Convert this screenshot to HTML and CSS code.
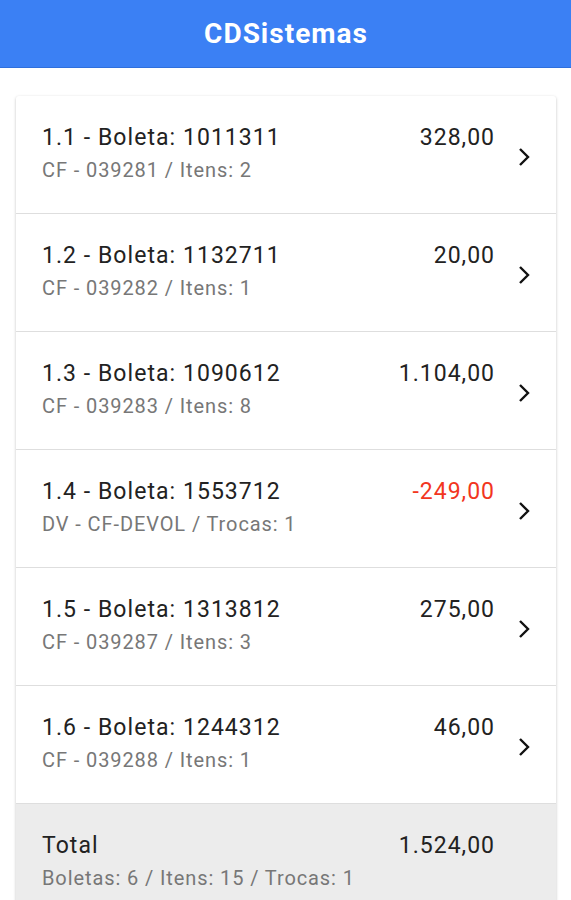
FILE: index.html
```html
<!DOCTYPE html>
<html lang="pt-BR">
  <head>
    <meta charset="UTF-8" />
    <meta name="viewport" content="width=device-width, initial-scale=1.0" />
    <title>CDSistemas</title>
    <link rel="stylesheet" href="styles.css">
  </head>

  <body>
    <header class="toolbar">
      <h1 class="toolbar-title">CDSistemas</h1>
    </header>

    <main class="content">
      <div class="card">
        <div class="item">
          <div class="item-text">
            <h2>1.1 - Boleta: 1011311</h2>
            <p>CF - 039281 / Itens: 2</p>
          </div>
          <span class="item-value">328,00</span>
          <svg class="chevron" viewBox="0 0 12 20"><path d="M2 2l8 8-8 8" /></svg>
        </div>
        <div class="item">
          <div class="item-text">
            <h2>1.2 - Boleta: 1132711</h2>
            <p>CF - 039282 / Itens: 1</p>
          </div>
          <span class="item-value">20,00</span>
          <svg class="chevron" viewBox="0 0 12 20"><path d="M2 2l8 8-8 8" /></svg>
        </div>
        <div class="item">
          <div class="item-text">
            <h2>1.3 - Boleta: 1090612</h2>
            <p>CF - 039283 / Itens: 8</p>
          </div>
          <span class="item-value">1.104,00</span>
          <svg class="chevron" viewBox="0 0 12 20"><path d="M2 2l8 8-8 8" /></svg>
        </div>
        <div class="item">
          <div class="item-text">
            <h2>1.4 - Boleta: 1553712</h2>
            <p>DV - CF-DEVOL / Trocas: 1</p>
          </div>
          <span class="item-value negative">-249,00</span>
          <svg class="chevron" viewBox="0 0 12 20"><path d="M2 2l8 8-8 8" /></svg>
        </div>
        <div class="item">
          <div class="item-text">
            <h2>1.5 - Boleta: 1313812</h2>
            <p>CF - 039287 / Itens: 3</p>
          </div>
          <span class="item-value">275,00</span>
          <svg class="chevron" viewBox="0 0 12 20"><path d="M2 2l8 8-8 8" /></svg>
        </div>
        <div class="item">
          <div class="item-text">
            <h2>1.6 - Boleta: 1244312</h2>
            <p>CF - 039288 / Itens: 1</p>
          </div>
          <span class="item-value">46,00</span>
          <svg class="chevron" viewBox="0 0 12 20"><path d="M2 2l8 8-8 8" /></svg>
        </div>
        <div class="item total">
          <div class="item-text">
            <h2>Total</h2>
            <p>Boletas: 6 / Itens: 15 / Trocas: 1</p>
          </div>
          <span class="item-value">1.524,00</span>
          <span class="chevron-space"></span>
        </div>
      </div>
    </main>
  </body>
</html>
```

FILE: styles.css
```css
body {
  font-family: Roboto, "Noto Sans", sans-serif;
  background-color: #fff;
  margin: 0;
  height: 900px;
  overflow: hidden;
}

.toolbar {
  height: 67px;
  background-color: #3b80f4;
  border-bottom: 1px solid #2f6fdc;
  display: flex;
  align-items: center;
  justify-content: center;
}

.toolbar-title {
  margin: 0 0 0 1px;
  color: #fff;
  font-size: 28px;
  font-weight: 700;
  letter-spacing: 1px;
}

.content {
  padding: 28px 15px 0 16px;
}

.card {
  background-color: #fff;
  border-radius: 3px;
  box-shadow: 0 1px 3px rgba(0, 0, 0, 0.25);
}

.item {
  display: flex;
  align-items: flex-start;
  height: 89px;
  padding: 28px 26px 0;
  border-bottom: 1px solid #dedede;
}

.item-text {
  flex: 1;
}

.item-text h2 {
  margin: 0 0 6px;
  font-size: 23px;
  font-weight: 400;
  color: #222;
  line-height: 28px;
  letter-spacing: 1.05px;
}

.item-text p {
  margin: 0;
  font-size: 20px;
  color: #777;
  line-height: 25px;
  letter-spacing: 0.9px;
}

.item-value {
  font-size: 23px;
  line-height: 28px;
  color: #222;
  letter-spacing: 1px;
}

.item-value.negative {
  color: #f2361e;
}

.chevron {
  width: 12px;
  height: 20px;
  margin: 23px 0 0 23px;
  fill: none;
  stroke: #111;
  stroke-width: 2.4;
}

.chevron-space {
  width: 12px;
  margin-left: 23px;
}

.total {
  background-color: #ececec;
  border-bottom: none;
}
```
